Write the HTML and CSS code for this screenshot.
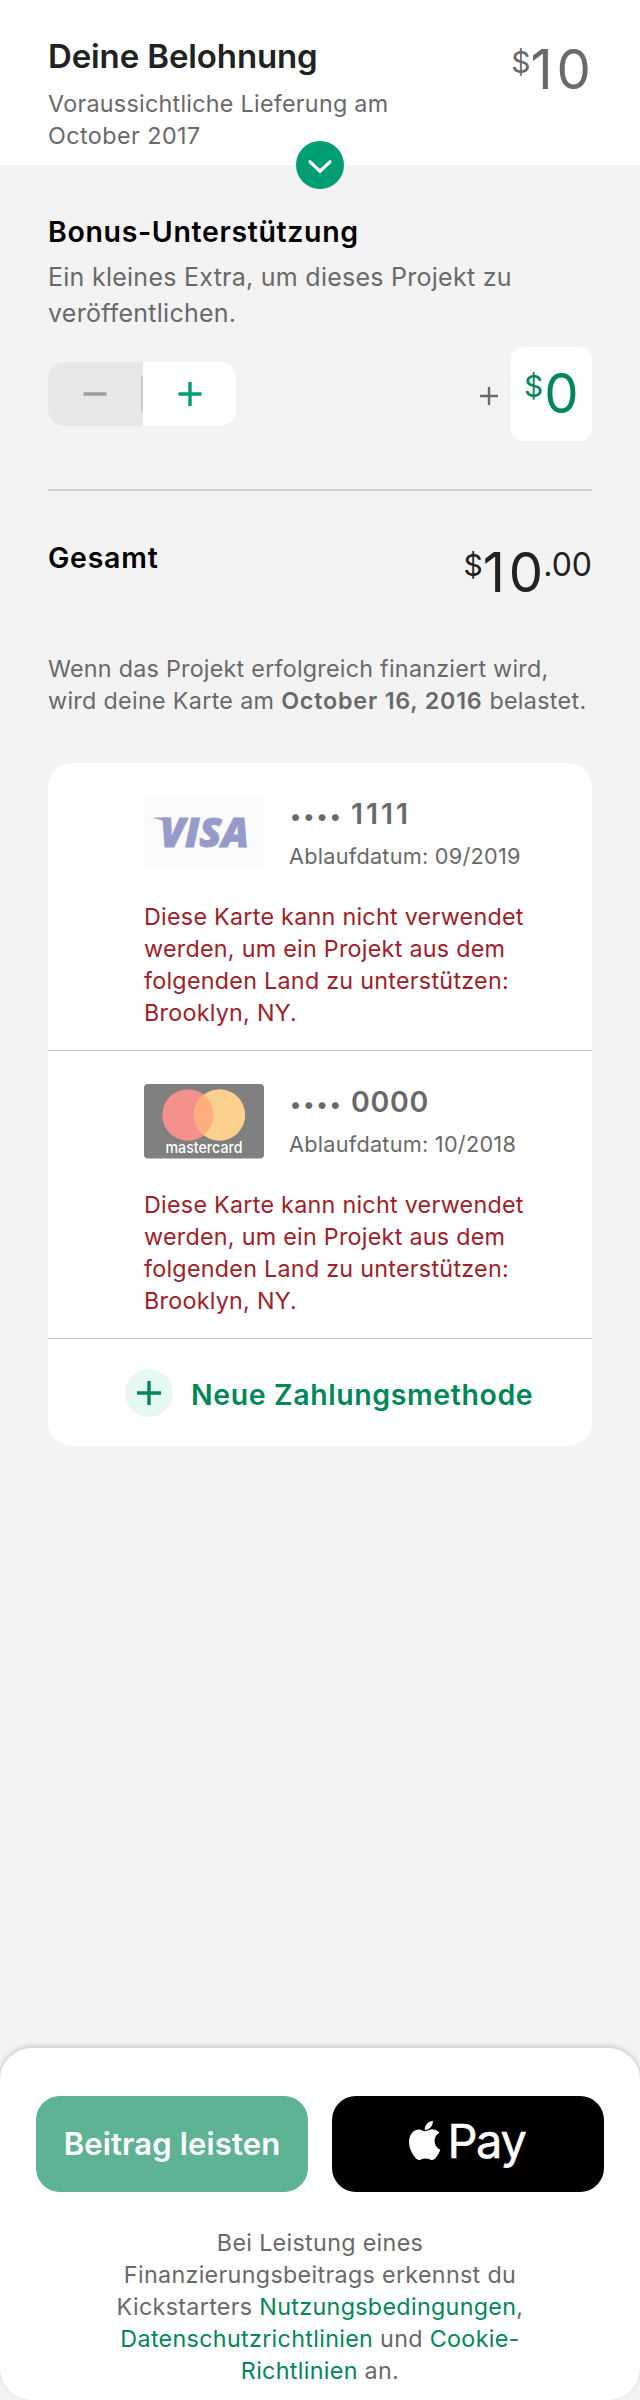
FILE: index.html
```html
<!DOCTYPE html>
<html lang="de">
<head>
<meta charset="utf-8">
<title>Deine Belohnung</title>
<link rel="stylesheet" href="styles.css">
</head>
<body>
<div class="page">
  <header class="reward">
    <div class="reward-info">
      <h1 class="reward-title">Deine Belohnung</h1>
      <p class="copy reward-date">Voraussichtliche Lieferung am<br><span class="reward-month">October 2017</span></p>
    </div>
    <div class="price price-gray"><span class="sup">$</span><span class="num">10</span></div>
    <button class="expand" aria-label="Details">
      <svg width="48" height="48" viewBox="0 0 48 48"><circle cx="24" cy="24" r="24" fill="#009e74"/><path d="M14 20.800 24 30.200 34 20.800" fill="none" stroke="#fff" stroke-width="3.200" stroke-linecap="round"/></svg>
    </button>
  </header>

  <main class="main">
    <h2 class="heading">Bonus-Unterstützung</h2>
    <p class="bonus-text">Ein kleines Extra, um dieses Projekt zu<br>veröffentlichen.</p>
    <div class="bonus-row">
      <div class="stepper">
        <button class="step step-minus" aria-label="Weniger"><svg width="24" height="24" viewBox="0 0 24 24"><path d="M.5 12h23" stroke="#9a9f9e" stroke-width="3.600"/></svg></button>
        <button class="step step-plus" aria-label="Mehr"><svg width="24" height="24" viewBox="0 0 24 24"><path d="M.5 12h23M12 0v24" stroke="#009e74" stroke-width="3.400"/></svg></button>
      </div>
      <svg class="add" width="18" height="18" viewBox="0 0 18 18"><path d="M0 9h18M9 0v18" stroke="#696969" stroke-width="2.400"/></svg>
      <div class="amount"><div class="price price-green"><span class="sup">$</span><span class="num">0</span></div></div>
    </div>
    <hr class="rule">
    <div class="total-row">
      <h2 class="heading heading-total">Gesamt</h2>
      <div class="price price-black"><span class="sup">$</span><span class="num">10</span><span class="sup cents">.00</span></div>
    </div>
    <p class="copy note"><span class="note-first">Wenn das Projekt erfolgreich finanziert wird,</span><br>wird deine Karte am <b class="date">October 16, 2016</b> belastet.</p>

    <section class="cards">
      <article class="card">
        <div class="card-top">
          <svg width="120" height="74" viewBox="0 0 120 74"><rect width="120" height="74" rx="4" fill="#fbfbfb"/><path d="M9.500 21.500h14l3 10C22 25.500 16 23 9.500 22.300z" fill="#969bca"/><text class="visa" x="16" y="51" textLength="89" lengthAdjust="spacingAndGlyphs">VISA</text></svg>
          <div class="card-info">
            <div class="number"><span class="dots">••••</span><span class="ones">1111</span></div>
            <div class="expiry">Ablaufdatum: 09/2019</div>
          </div>
        </div>
        <p class="copy error">Diese Karte kann nicht verwendet<br>werden, um ein Projekt aus dem<br>folgenden Land zu unterstützen:<br>Brooklyn, NY.</p>
      </article>
      <article class="card">
        <div class="card-top">
          <svg width="120" height="75" viewBox="0 0 120 75"><rect width="120" height="74.500" rx="4" fill="#808080"/><circle cx="44" cy="31" r="25.700" fill="#f5918d"/><circle cx="75.500" cy="31" r="25.700" fill="#fbd08f"/><path d="M59.750 10.700a25.700 25.700 0 0 1 0 40.600a25.700 25.700 0 0 1 0-40.600z" fill="#ffae80"/><text class="mc" x="21.500" y="69.200" textLength="77" lengthAdjust="spacingAndGlyphs">mastercard</text></svg>
          <div class="card-info">
            <div class="number"><span class="dots">••••</span><span>0000</span></div>
            <div class="expiry">Ablaufdatum: 10/2018</div>
          </div>
        </div>
        <p class="copy error">Diese Karte kann nicht verwendet<br>werden, um ein Projekt aus dem<br>folgenden Land zu unterstützen:<br>Brooklyn, NY.</p>
      </article>
      <button class="new-method">
        <svg width="48" height="48" viewBox="0 0 48 48"><circle cx="24" cy="24" r="24" fill="#e6f9f1"/><path d="M12 24h24M24 12v24" stroke="#028858" stroke-width="3.400"/></svg>
        <span class="new-label">Neue Zahlungsmethode</span>
      </button>
    </section>
  </main>

  <footer class="footer">
    <div class="actions">
      <button class="btn btn-pledge">Beitrag leisten</button>
      <button class="btn btn-apple">
        <svg width="32" height="40" viewBox="0 0 32 40"><path d="M16.200 10.200c2 0 5-2.100 8-1.800 2.500.1 4.800 1.200 6.200 3.300-3.200 2-5 4.700-4.800 8.400.1 3.900 2.200 7.200 5.700 8.700-1 2.900-2.500 5.500-4.500 8-1.500 1.800-3 2.600-5.200 1.900-3.800-1.700-6.700-1.600-10.100 0-2.200.8-3.800-.2-5.400-2.200C-1 28.200-1.900 17 3.400 11.400c2.300-2.400 5.300-3.400 8.100-2.700 1.800.5 3.300 1.500 4.700 1.500zM15.800 9c-.4-4.600 3.300-8.700 8-9 .5 4.800-3.600 9.200-8 9z" fill="#fff"/></svg>
        <span class="pay">Pay</span>
      </button>
    </div>
    <p class="copy legal">Bei Leistung eines<br>Finanzierungsbeitrags erkennst du<br>Kickstarters <a>Nutzungsbedingungen</a>,<br><a>Datenschutzrichtlinien</a> und <a>Cookie-<br>Richtlinien</a> an.</p>
  </footer>
</div>
</body>
</html>
```
FILE: styles.css
```css
* { box-sizing: border-box; margin: 0; padding: 0; }
body { background: #f3f3f3; font-family: Inter, "Liberation Sans", sans-serif; color: #696969; }
button { border: 0; background: none; font: inherit; color: inherit; }
svg { display: block; flex: none; }
.page { width: 640px; height: 2400px; display: flex; flex-direction: column; }

.reward { position: relative; display: flex; justify-content: space-between; height: 165px; padding: 36px 49px 0 48px; background: #fff; }
.reward-title { font-size: 33px; line-height: 40px; font-weight: 600; color: #222; letter-spacing: -.12px; white-space: nowrap; }
.copy { font-size: 23.3px; line-height: 32px; letter-spacing: .27px; white-space: nowrap; }
.reward-date { margin-top: 12px; }
.reward-month { letter-spacing: .45px; }
.expand { position: absolute; left: 296px; bottom: -24px; }

.price { display: flex; align-items: flex-start; height: 60px; }
.num { font-size: 54.500px; line-height: 58px; letter-spacing: 4px; margin-right: -4px; }
.sup { font-size: 30px; line-height: 45px; }
.cents { font-size: 32px; line-height: 44px; }
.price-gray { margin-top: 4px; color: #696969; }
.price-green { gap: 1px; color: #028858; }
.price-black { margin-top: 4px; color: #222; }

.main { flex: 1; padding: 49px 48px 0; }
.heading { font-size: 28.5px; line-height: 36px; font-weight: 600; color: #000; letter-spacing: .65px; }
.heading-total { letter-spacing: .75px; padding-top: 1px; }
.bonus-text { margin-top: 9px; font-size: 25px; line-height: 36px; letter-spacing: .26px; }
.bonus-row { display: flex; align-items: center; height: 94px; margin-top: 16px; }
.stepper { display: flex; width: 188px; height: 64px; border-radius: 16px; overflow: hidden; background: #fff; }
.step { display: flex; align-items: center; justify-content: center; }
.step-minus { width: 95px; padding-right: 2px; background: linear-gradient(#ccc, #ccc) right center / 2px 36px no-repeat #e8e8e8; }
.step-plus { width: 93px; }
.add { margin-left: auto; margin-right: 13px; margin-top: 4px; }
.amount { width: 81px; height: 94px; padding: 17px 0 0 13px; border-radius: 12px; background: #fff; }
.rule { height: 2px; margin-top: 48px; border: 0; background: #d0d2d0; }
.total-row { display: flex; justify-content: space-between; height: 114px; margin-top: 48px; }
.note { letter-spacing: .32px; }
.note-first { letter-spacing: .25px; }
.date { font-weight: 600; letter-spacing: .8px; }

.cards { margin-top: 46px; height: 683px; border-radius: 24px; background: #fff; }
.card { height: 288px; padding: 33px 0 0 96px; border-bottom: 1px solid #c6c6c6; }
.card-top { display: flex; gap: 25px; height: 74px; }
.number { display: flex; align-items: baseline; height: 36px; font-size: 28.5px; line-height: 36px; font-weight: 600; letter-spacing: .7px; }
.dots { width: 62px; padding-left: 1px; font-size: 22px; letter-spacing: 2.200px; }
.ones { letter-spacing: 2.950px; }
.expiry { margin-top: 10px; font-size: 21.7px; line-height: 28px; letter-spacing: .25px; white-space: nowrap; }
.error { margin-top: 31px; color: #a12027; }
.new-method { display: flex; align-items: center; gap: 18px; height: 107px; padding-left: 77px; }
.new-label { font-size: 28.5px; line-height: 36px; font-weight: 600; color: #028858; letter-spacing: .6px; padding-top: 4px; }
.visa { font: italic 800 40px "Open Sans", sans-serif; fill: #969bca; stroke: #969bca; stroke-width: 1px; }
.mc { font: 500 15.500px Inter, sans-serif; fill: #fff; }

.footer { height: 352px; padding: 48px 36px 0; border-radius: 32px; background: #fff; box-shadow: 0 -2px 5px rgba(0, 0, 0, .17); }
.actions { display: flex; gap: 24px; }
.btn { display: flex; align-items: center; justify-content: center; width: 272px; height: 96px; border-radius: 24px; color: #fff; }
.btn-pledge { background: #5fb395; padding-bottom: 2px; font-size: 31px; font-weight: 600; letter-spacing: .15px; white-space: nowrap; }
.btn-apple { background: #000; gap: 6px; padding-right: 1px; }
.btn-apple svg { margin-top: -7px; }
.pay { font-size: 47px; line-height: 60px; letter-spacing: -1.300px; -webkit-text-stroke: .5px #fff; padding-bottom: 6px; }
.legal { margin-top: 35px; text-align: center; letter-spacing: .32px; }
.legal a { color: #028858; }
```
